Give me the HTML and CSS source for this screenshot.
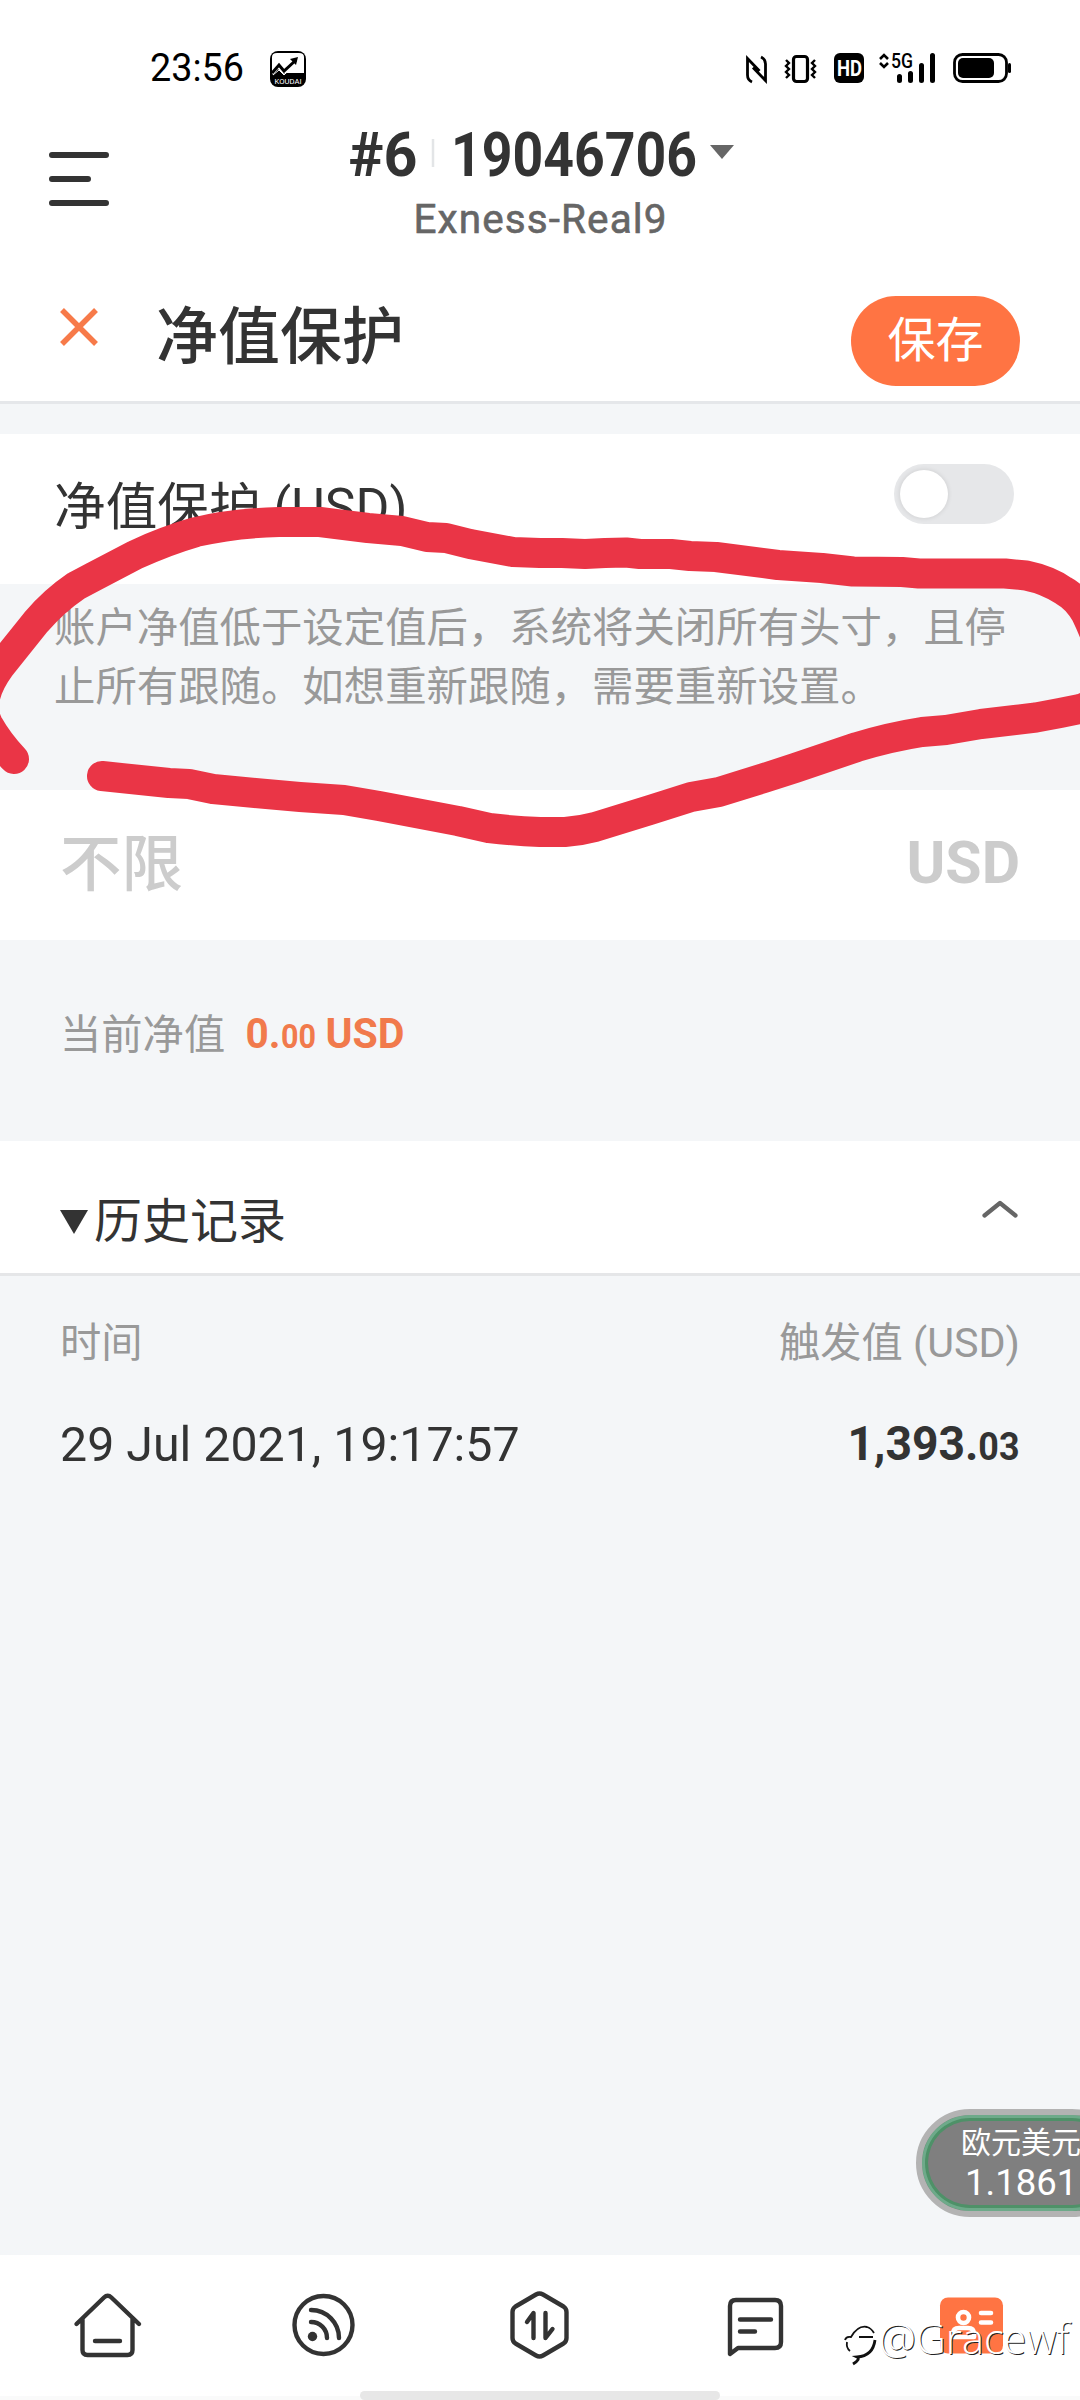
FILE: index.html
```html
<!DOCTYPE html>
<html lang="zh-CN">
<head>
<meta charset="utf-8">
<title>净值保护</title>
<link rel="stylesheet" href="styles.css">
</head>
<body>
<div class="screen">
  <div class="status">
    <svg class="clock" width="95" height="44" viewBox="0 0 95 44"><text x="0" y="33" font-size="38" textLength="94" lengthAdjust="spacingAndGlyphs">23:56</text></svg>
    <svg class="app" width="36" height="36" viewBox="0 0 36 36"><rect width="36" height="36" rx="8"/><path d="M2 22V6q0-4 5-4h22q5 0 5 4v16H17l-4 1-5-5-5 6z" fill="#fff"/><path d="M2 22l7-8 5 6L26 9" fill="none" stroke="#000" stroke-width="3"/><path d="M20 8l8-2-2 8z"/><path d="M3 24l6-5 5 5 2-2" fill="none" stroke="#fff" stroke-width="1"/><text x="4.500" y="32.500" font-size="8" fill="#fff" textLength="27" lengthAdjust="spacingAndGlyphs">KOUDAI</text></svg>
    <svg class="signals" width="270" height="34" viewBox="744 51 270 34">
      <g fill="none" stroke="#000" stroke-width="3.200">
        <path d="M752 82q-4.500-2-4.500-7V58.500L759.500 71M761 57q4.500 2 4.500 7v16.500L753 67.500" stroke-width="2.800"/>
        <rect x="793.500" y="56.500" width="14" height="25" rx="3"/>
        <path d="M786 60l3 3-3 3 3 3-3 3 3 3-3 3M815 60l-3 3 3 3-3 3 3 3-3 3 3 3" stroke-width="2.400"/>
        <path d="M880 59l4-4 4 4M880 63l4 4 4-4" stroke-width="2.600"/>
        <rect x="954.500" y="54.500" width="52" height="27" rx="8" stroke-width="2.800"/>
      </g>
      <rect x="834" y="53" width="30" height="30" rx="6"/>
      <text x="837" y="75.500" font-size="22" font-weight="700" fill="#fff" textLength="25" lengthAdjust="spacingAndGlyphs">HD</text>
      <text x="891" y="67.500" font-size="20" font-weight="500" textLength="22" lengthAdjust="spacingAndGlyphs">5G</text>
      <path d="M899.500 76.500v4M910.500 73.500v7M921.500 65.500v15M932.500 55.500v25" stroke="#000" stroke-width="5" stroke-linecap="round"/>
      <rect x="958" y="58" width="36" height="20" rx="5"/><rect x="1008" y="63" width="3" height="10" rx="1.500"/>
    </svg>
  </div>

  <header class="account">
    <svg class="menu" width="60" height="54" viewBox="0 0 60 54"><path d="M3 3h54M3 27h36M3 51h54" stroke="#333" stroke-width="6" stroke-linecap="round"/></svg>
    <div class="account-text">
      <svg width="390" height="56" viewBox="348 126 390 56"><text x="348.500" y="176" font-size="61.500" font-weight="700" textLength="69" lengthAdjust="spacingAndGlyphs">#6</text><path d="M433 139v28" stroke="#e3e5e7" stroke-width="2.500"/><text x="451" y="176" font-size="61.500" font-weight="700" textLength="246" lengthAdjust="spacingAndGlyphs">19046706</text><path d="M710 145h24l-12 14z" fill="#666"/></svg>
      <svg width="390" height="48" viewBox="348 196 390 48"><text x="413.500" y="233" font-size="40.500" fill="#666" textLength="253" lengthAdjust="spacing" stroke="#666" stroke-width=".6">Exness-Real9</text></svg>
    </div>
  </header>

  <div class="titlebar">
    <svg class="close" width="40" height="40" viewBox="0 0 40 40"><path d="M3 3l34 34M37 3L3 37" stroke="#f77a49" stroke-width="5.500"/></svg>
    <h1>净值保护</h1>
    <button class="save">保存</button>
  </div>

  <section class="row switch-row"><span>净值保护 (USD)</span><i class="toggle"></i></section>
  <p class="note">账户净值低于设定值后，系统将关闭所有头寸，且停止所有跟随。如想重新跟随，需要重新设置。</p>
  <section class="row limit"><span class="value">不限</span><span class="unit">USD</span></section>
  <section class="current"><span>当前净值</span>
    <svg width="160" height="44" viewBox="246 1010 160 44"><g font-weight="700" fill="#f17a4c"><text x="245.500" y="1048" font-size="42" textLength="35" lengthAdjust="spacingAndGlyphs">0.</text><text x="281" y="1048" font-size="33.500" textLength="35" lengthAdjust="spacingAndGlyphs">00</text><text x="325.500" y="1048" font-size="42" textLength="79" lengthAdjust="spacingAndGlyphs">USD</text></g></svg>
  </section>
  <section class="history-head">
    <svg width="28" height="24" viewBox="0 0 28 24"><path d="M0 0h28L14 24z" fill="#333"/></svg>
    <h2>历史记录</h2>
    <svg class="chev" width="36" height="20" viewBox="0 0 36 20"><path d="M2.500 16.500L18 4l15.500 12.500" fill="none" stroke="#666" stroke-width="4.200" stroke-linecap="round" stroke-linejoin="round"/></svg>
  </section>
  <section class="history">
    <div class="line labels"><span>时间</span><span>触发值 (USD)</span></div>
    <div class="line entry"><span>29 Jul 2021, 19:17:57</span>
      <svg width="172" height="56" viewBox="848 1416 172 56"><text x="847.500" y="1460" font-size="49" font-weight="700" textLength="172" lengthAdjust="spacingAndGlyphs">1,393.<tspan font-size="38">03</tspan></text></svg>
    </div>
  </section>

  <nav class="tabs">
    <a><svg width="72" height="72" viewBox="72 2289 72 72"><path d="M76.500 2324L104 2297.500q3.700-3.500 7.400 0L139 2324M82.500 2319v31q0 5 5 5h40q5 0 5-5v-31M95 2341h25"/></svg></a>
    <a><svg width="72" height="72" viewBox="288 2289 72 72"><circle cx="323.500" cy="2325" r="29"/><path d="M311 2310c16 0 28 13 28 28M311 2322c9 0 16 7 16 16"/><circle cx="312.500" cy="2336.500" r="4.700" class="solid"/></svg></a>
    <a><svg width="72" height="72" viewBox="504 2289 72 72"><path d="M536 2294.500q3.500-2 7 0l20.500 12q3 2 3 5.500v26q0 3.500-3 5.500l-20.500 12q-3.500 2-7 0l-20.500-12q-3-2-3-5.500v-26q0-3.500 3-5.500zM527 2322l6.500-9v25M545.500 2313v25l7-9"/></svg></a>
    <a><svg width="72" height="72" viewBox="720 2289 72 72"><path d="M730 2354v-48q0-6 6-6h39q6 0 6 6v36q0 6-6 6h-37zM740 2319.500h31M740 2331.500h15"/></svg></a>
    <a><svg width="72" height="72" viewBox="936 2289 72 72"><rect x="940" y="2297.500" width="63" height="56" rx="8" class="card"/><g class="person"><circle cx="963.500" cy="2317.500" r="5.500"/><path d="M953 2337v-3q0-6 6-6h9q6 0 6 6v3zM981 2313h10M981 2322.500h10"/></g></svg></a>
  </nav>
  <div class="gesture"><i></i></div>

  <svg class="marker" width="1080" height="900" viewBox="0 0 1080 900"><path d="M14 759Q-2 742-12 724Q-24 700 0 667L36 622Q54 601 76 586L93 577L135 555Q165 541 196 532Q235 523 279 522L320 522L368 528L402 531L427 537L446 538L470 544L513 552L540 553L562 553L585 554L605 553L626 552.500L640 554L671 554L690 556L716 557L778 565L822 568L853 571.500L902 572L919 573.500L1005 573.500L1026 575.500Q1048 580 1064 591Q1077 598 1086 614Q1125 695 1080 709L1060 713L1036 717.500L1015 720L981 724L946 730L922 732Q890 737 857 747L795 768L764 778L719 792L691 797L650 810L595 827Q580 831 565 832L540 832Q515 831 489 828L458 821L379 806L344 800L300 797L255 793L213 789L189 784L169 783L102 776"/></svg>
  <div class="quote"><span>欧元美元</span><b>1.1861</b></div>
  <div class="watermark"><svg width="34" height="44" viewBox="0 0 34 44"><g fill="none"><path stroke="#fff" stroke-width="3" d="M0 15h6Q12 2 22 3Q28 5 29 14"/><path stroke="#111" stroke-width="1.800" d="M1 15Q2 11 7 12Q14 0 23 2Q27 3 30 8M3 17q-1 6 3 9M15 12h14"/><path stroke="#111" stroke-width="2.800" d="M31 15Q29 31 13 32Q17 34 9 39"/></g></svg><span>@Gracewf</span></div>
</div>
</body>
</html>
```
FILE: styles.css
```css
* { box-sizing: border-box; margin: 0; padding: 0; }
body { font-family: Roboto, "Noto Sans CJK SC", sans-serif; color: #333; background: #f4f5f7; }
svg { display: block; flex: none; overflow: visible; }
svg text { font-family: Roboto, "Noto Sans CJK SC", sans-serif; }
.screen { position: relative; width: 1080px; height: 2400px; overflow: hidden; display: flex; flex-direction: column; background: #f4f6f8; }

.status { height: 120px; flex: none; display: flex; align-items: flex-start; padding: 48px 66px 0 150px; background: #fff; color: #000; }
.app { margin: 3px 0 0 25px; }
.signals { margin: 3px 0 0 auto; }

.account { height: 150px; flex: none; display: flex; align-items: flex-start; padding-left: 49px; background: #fff; }
.account svg { fill: #333; }
.menu { margin-top: 32px; }
.account-text { display: flex; flex-direction: column; gap: 14px; margin: 6px 0 0 239px; }

.titlebar { height: 134px; flex: none; display: flex; align-items: flex-start; padding: 0 60px 0 59px; background: #fff; border-bottom: 3px solid #e5e7ea; }
.close { margin-top: 37px; }
h1 { margin: 23px 0 0 57px; font-size: 62px; line-height: 90px; font-weight: 500; }
.save { margin: 26px 0 0 auto; width: 169px; height: 90px; border: 0; border-radius: 45px; background: #ff7443; color: #fff; font: 400 48px/88px Roboto, "Noto Sans CJK SC", sans-serif; }

.row { height: 150px; flex: none; display: flex; justify-content: space-between; align-items: center; background: #fff; }
.switch-row { margin-top: 30px; padding: 0 66px 0 54px; font-size: 51.7px; }
.switch-row span { margin-bottom: 13px; }
.toggle { width: 120px; height: 60px; border-radius: 30px; background: #e6e7e9; padding: 6px; margin-bottom: 30px; }
.toggle::before { content: ""; display: block; width: 48px; height: 48px; border-radius: 50%; background: #fff; box-shadow: 0 0 5px rgba(0,0,0,.12); }
.note { height: 206px; flex: none; padding: 15px 70px 0 54px; font-size: 41.4px; line-height: 58.5px; color: #999; }
.limit { padding: 0 60px 8px; color: #ccc; font-size: 61.5px; font-weight: 500; }
.value { margin-bottom: 4px; }
.unit { font-size: 59px; font-weight: 700; margin-top: 2px; }
.current { height: 201px; flex: none; display: flex; align-items: center; padding: 0 60px 19px; gap: 21px; font-size: 41.3px; color: #999; }
.current svg { margin-top: 2px; }
.history-head { height: 135px; flex: none; display: flex; align-items: center; padding: 30px 62px 0 60px; background: #fff; border-bottom: 3px solid #e5e6e8; }
h2 { font-size: 48px; font-weight: 400; line-height: 70px; margin-left: 6px; }
.chev { margin: 0 0 26px auto; }
.history { flex: 1; padding: 27px 60px 30px; }
.line { display: flex; justify-content: space-between; align-items: center; }
.labels { height: 72px; font-size: 41.3px; color: #999; }
.entry { height: 138px; font-size: 48.3px; }
.entry svg { fill: #333; }

.tabs { height: 136px; flex: none; display: grid; grid-template-columns: repeat(5, 1fr); justify-items: center; padding-top: 34px; background: #fff; }
.tabs svg { fill: none; stroke: #333; stroke-width: 4.4; stroke-linecap: round; stroke-linejoin: round; }
.tabs .solid { fill: #333; stroke: none; }
.tabs .card { fill: #ff7443; stroke: none; }
.tabs .person { stroke: #fff; stroke-width: 4.6; }
.gesture { height: 9px; flex: none; display: flex; justify-content: center; background: linear-gradient(#fff 5px, #fafafa 5px); }
.gesture i { width: 360px; background: #e7e7e7; border-radius: 5px; }

.marker { position: absolute; left: 0; top: 0; fill: none; stroke: #ea3546; stroke-width: 30; stroke-linecap: round; stroke-linejoin: round; }
.quote { position: absolute; left: 916px; top: 2109px; width: 210px; height: 108px; border: 6px solid #b3b3b3; border-radius: 54px; background: #7f7f7f; box-shadow: inset 0 0 0 3px #6eaa8a, inset 0 0 0 6px #4e9168; color: #fff; display: flex; flex-direction: column; padding: 7px 0 0 39px; }
.quote span { font-size: 30px; line-height: 41px; white-space: nowrap; }
.quote b { font-size: 36.5px; line-height: 40px; font-weight: 400; padding-left: 4px; }
.watermark { position: absolute; left: 844px; top: 2325px; display: flex; gap: 1px; color: #fff; }
.watermark span { font: 300 41.5px/26px "Open Sans", "Noto Sans", sans-serif; text-shadow: 1px 1px 0 #222; }
```
